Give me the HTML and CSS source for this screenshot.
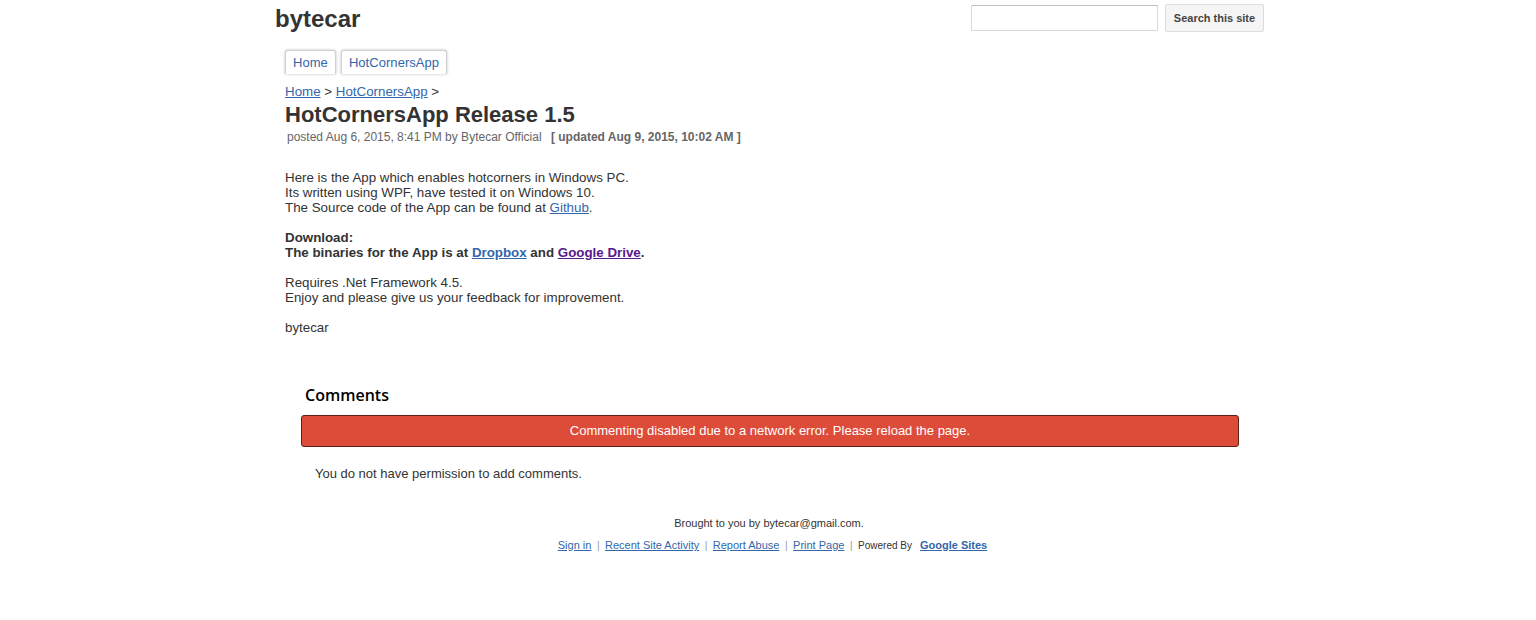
FILE: index.html
```html
<!DOCTYPE html>
<html>
<head>
<meta charset="utf-8">
<link rel="stylesheet" href="styles.css">
</head>
<body>
<div class="page">
  <header class="header">
    <div class="site-title">bytecar</div>
    <form class="search">
      <input class="search-input" type="text">
      <button class="search-btn" type="button">Search this site</button>
    </form>
  </header>
  <nav class="tabs">
    <a class="tab">Home</a>
    <a class="tab">HotCornersApp</a>
  </nav>
  <main class="content">
    <div class="crumbs"><a href="#">Home</a> &gt; <a href="#">HotCornersApp</a> &gt;</div>
    <h1 class="title">HotCornersApp Release 1.5</h1>
    <div class="meta">posted Aug 6, 2015, 8:41 PM by Bytecar Official <span class="updated">[ updated Aug 9, 2015, 10:02 AM ]</span></div>
    <div class="body">
      <p>Here is the App which enables hotcorners in Windows PC.<br>Its written using WPF, have tested it on Windows 10.<br>The Source code of the App can be found at <a href="#">Github</a>.</p>
      <p class="bold">Download:<br>The binaries for the App is at <a href="#">Dropbox</a> and <a href="#" class="visited">Google Drive</a>.</p>
      <p>Requires .Net Framework 4.5.<br>Enjoy and please give us your feedback for improvement.</p>
      <p>bytecar</p>
    </div>
    <section class="comments">
      <h2 class="comments-title">Comments</h2>
      <div class="error">Commenting disabled due to a network error. Please reload the page.</div>
      <div class="perm">You do not have permission to add comments.</div>
    </section>
  </main>
  <footer class="footer">
    <div class="brought">Brought to you by bytecar@gmail.com.</div>
    <div class="links">
      <a href="#">Sign in</a><span class="sep">|</span><a href="#">Recent Site Activity</a><span class="sep">|</span><a href="#">Report Abuse</a><span class="sep">|</span><a href="#">Print Page</a><span class="sep">|</span><span class="powered">Powered By</span><a href="#" class="gs">Google Sites</a>
    </div>
  </footer>
</div>
</body>
</html>
```
FILE: styles.css
```css
html, body { margin: 0; padding: 0; background: #fff; }
body { font-family: "Liberation Sans", Arial, sans-serif; color: #333; font-size: 13px; }
a { color: #3366aa; text-decoration: underline; }
.page { width: 990px; margin: 0 auto; padding-left: 2px; box-sizing: border-box; }
.header { display: flex; justify-content: space-between; align-items: flex-start; height: 46px; margin-right: -1px; }
.site-title { font-size: 24px; font-weight: bold; color: #333; margin-top: 5px; line-height: 28px; }
.search { display: flex; gap: 7px; margin-top: 4px; }
.search-input { width: 187px; height: 26px; box-sizing: border-box; border: 1px solid #d9d9d9; border-top-color: #c0c0c0; margin-top: 1px; padding: 0 4px; }
.search-btn { height: 28px; width: 99px; box-sizing: border-box; background: #f5f5f5; border: 1px solid #dcdcdc; border-radius: 2px; font-family: "Liberation Sans", Arial, sans-serif; font-size: 11px; font-weight: bold; color: #444; padding: 0; }
.tabs { display: flex; gap: 5px; padding-left: 10px; margin-top: 4px; height: 24px; align-items: flex-end; }
.tab { display: block; height: 23px; line-height: 24px; padding: 0 7px; border: 1px solid #d0d0d0; border-bottom: none; border-radius: 3px 3px 0 0; box-shadow: 0 0 3px rgba(0,0,0,0.25); font-size: 13px; letter-spacing: 0.05px; color: #3366aa; text-decoration: none; background: #fff; }
.content { padding-left: 10px; }
.crumbs { margin-top: 10px; line-height: 15px; font-size: 10pt; }
.title { font-size: 22px; font-weight: bold; margin: 3px 0 0; line-height: 26px; color: #333; }
.meta { font-size: 12px; color: #666; padding-left: 2px; margin-top: 2px; line-height: 14px; }
.updated { font-weight: bold; margin-left: 6px; }
.body { margin-top: 26px; line-height: 15px; font-size: 10pt; }
.body p { margin: 0 0 15px; }
.bold { font-weight: bold; }
.visited { color: #551a8b; }
.comments { padding-left: 16px; margin-top: 50px; }
.comments-title { font-family: "Open Sans", sans-serif; font-size: 16px; font-weight: 600; color: #000; margin: 0 0 0 4px; line-height: 20px; }
.error { margin-top: 10px; width: 938px; height: 32px; box-sizing: border-box; background: #dd4b39; border: 1px solid #602019; border-radius: 3px; color: #fff; text-align: center; line-height: 30px; font-size: 13px; }
.perm { margin-top: 19px; padding-left: 14px; font-size: 13px; line-height: 16px; }
.footer { text-align: center; font-size: 11px; margin-top: 34px; }
.brought { line-height: 14px; color: #333; }
.links { margin-top: 8px; line-height: 14px; padding-left: 7px; }
.links a { color: #3366aa; }
.sep { color: #999; margin: 0 5.5px; font-size: 10px; }
.powered { font-size: 10px; color: #333; margin-right: 8px; }
.gs { font-weight: bold; }
```
